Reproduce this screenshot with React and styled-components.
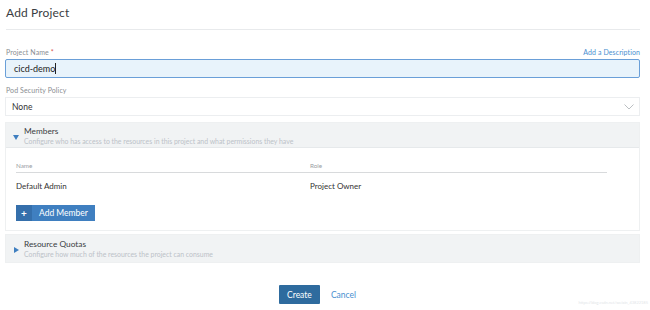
import React from "react";
import styled, { createGlobalStyle } from "styled-components";

const Global = createGlobalStyle`
  html, body { margin: 0; padding: 0; background: #fff; }
  body { font-family: Lato, "Open Sans", sans-serif; color: #333; }
`;

const Page = styled.div`
  width: 635px;
  padding: 0 10px 0 5px;
  position: relative;
  height: 310px;
`;

const Header = styled.div`
  height: 30px;
  margin-left: 1px;
  border-bottom: 1px solid #e8eaec;
  display: flex;
  align-items: center;
  box-sizing: border-box;
`;

const Title = styled.h1`
  margin: 0 0 5px;
  font-size: 12px;
  font-weight: 400;
  color: #3a3d42;
  letter-spacing: 0.15px;
`;

const LabelRow = styled.div`
  display: flex;
  justify-content: space-between;
  align-items: flex-end;
  padding: 0 0 0 1px;
  height: 10px;
  margin-top: ${(p) => p.$top}px;
  margin-bottom: 3px;
`;

const Label = styled.span`
  font-size: 7px;
  color: #8a8d92;
  letter-spacing: 0.1px;
`;

const Req = styled.span`
  color: #d9534f;
`;

const LinkSmall = styled.span`
  font-size: 7px;
  color: #4a8fcf;
  letter-spacing: 0.1px;
`;

const TextInput = styled.div`
  height: 19px;
  box-sizing: border-box;
  background: #e8f3fb;
  border: 1.5px solid #6a9fd8;
  border-radius: 2px;
  display: flex;
  align-items: center;
  padding-left: 8px;
  font-size: 9px;
  color: #222;
`;

const Caret = styled.span`
  display: inline-block;
  width: 1px;
  height: 11px;
  background: #222;
`;

const Select = styled.div`
  height: 19px;
  box-sizing: border-box;
  background: #fff;
  border: 1px solid #eceef0;
  display: flex;
  align-items: center;
  justify-content: space-between;
  padding: 0 5px 0 6px;
  font-size: 8.5px;
  color: #333;
`;

const Panel = styled.div`
  margin-top: ${(p) => p.$top}px;
  border: 1px solid #eef0f1;
  background: #fff;
`;

const PanelHead = styled.div`
  background: #f1f3f4;
  height: ${(p) => p.$h}px;
  display: flex;
  align-items: center;
  padding-left: 7px;
  box-sizing: border-box;
  border-bottom: ${(p) => (p.$open ? "1px solid #e6e9eb" : "none")};
`;

const Tri = styled.span`
  width: 6px;
  display: flex;
  align-items: center;
  justify-content: center;
  margin-right: 5px;
  margin-top: 3px;
`;

const HeadText = styled.div`
  display: flex;
  flex-direction: column;
  gap: 1px;
`;

const HeadTitle = styled.div`
  font-size: 8.3px;
  color: #3a3d42;
`;

const HeadDesc = styled.div`
  font-size: 6.9px;
  color: #bcc2c8;
`;

const PanelBody = styled.div`
  padding: 14px 32px 10px 10px;
  height: 82px;
  box-sizing: border-box;
`;

const Grid = styled.div`
  display: grid;
  grid-template-columns: 294px 1fr;
`;

const TH = styled.div`
  font-size: 6.3px;
  color: #9a9ea3;
  padding-bottom: 3px;
  border-bottom: 1px solid #d8dadc;
`;

const TD = styled.div`
  font-size: 8px;
  color: #333;
  padding-top: 8px;
  height: 10px;
`;

const AddBtn = styled.div`
  margin-top: 14px;
  display: inline-flex;
  height: 16px;
  background: #3f7fc0;
  color: #fff;
  font-size: 8.5px;
`;

const AddIcon = styled.span`
  width: 16px;
  display: flex;
  align-items: center;
  justify-content: center;
  background: #356fab;
  font-weight: 700;
  font-size: 10px;
`;

const AddText = styled.span`
  display: flex;
  align-items: center;
  padding: 0 7px 0 7px;
`;

const Footer = styled.div`
  margin-top: 22px;
  display: flex;
  justify-content: center;
  align-items: center;
  gap: 11px;
  padding-right: 10px;
`;

const Primary = styled.div`
  height: 19px;
  width: 41px;
  background: #2e6b9e;
  color: #fff;
  font-size: 8.5px;
  display: flex;
  align-items: center;
  justify-content: center;
  border-radius: 1px;
`;

const Link = styled.span`
  font-size: 8.5px;
  color: #4a8fcf;
`;

const Watermark = styled.span`
  position: absolute;
  right: 2px;
  bottom: 5px;
  font-size: 4px;
  color: #e3e6e9;
`;

const Triangle = ({ dir }) => (
  <svg width="6" height="6" viewBox="0 0 6 6">
    {dir === "down" ? (
      <path d="M0 1 L6 1 L3 6 Z" fill="#3f7fc0" />
    ) : (
      <path d="M1 0 L6 3 L1 6 Z" fill="#3f7fc0" />
    )}
  </svg>
);

export default function App() {
  return (
    <>
      <Global />
      <Page>
        <Header>
          <Title>Add Project</Title>
        </Header>
        <LabelRow $top={16}>
          <Label>
            Project Name <Req>*</Req>
          </Label>
          <LinkSmall>Add a Description</LinkSmall>
        </LabelRow>
        <TextInput>
          cicd-demo
          <Caret />
        </TextInput>
        <LabelRow $top={6}>
          <Label>Pod Security Policy</Label>
        </LabelRow>
        <Select>
          None
          <svg width="10" height="6" viewBox="0 0 10 6">
            <path d="M0.5 0.5 L5 5 L9.5 0.5" fill="none" stroke="#a9aeb3" strokeWidth="0.8" />
          </svg>
        </Select>
        <Panel $top={6}>
          <PanelHead $h={25} $open>
            <Tri>
              <Triangle dir="down" />
            </Tri>
            <HeadText>
              <HeadTitle>Members</HeadTitle>
              <HeadDesc>
                Configure who has access to the resources in this project and what permissions they have
              </HeadDesc>
            </HeadText>
          </PanelHead>
          <PanelBody>
            <Grid>
              <TH>Name</TH>
              <TH>Role</TH>
              <TD>Default Admin</TD>
              <TD>Project Owner</TD>
            </Grid>
            <AddBtn>
              <AddIcon>+</AddIcon>
              <AddText>Add Member</AddText>
            </AddBtn>
          </PanelBody>
        </Panel>
        <Panel $top={3}>
          <PanelHead $h={27}>
            <Tri>
              <Triangle dir="right" />
            </Tri>
            <HeadText>
              <HeadTitle>Resource Quotas</HeadTitle>
              <HeadDesc>Configure how much of the resources the project can consume</HeadDesc>
            </HeadText>
          </PanelHead>
        </Panel>
        <Footer>
          <Primary>Create</Primary>
          <Link>Cancel</Link>
        </Footer>
        <Watermark>https://blog.csdn.net/weixin_43822185</Watermark>
      </Page>
    </>
  );
}
